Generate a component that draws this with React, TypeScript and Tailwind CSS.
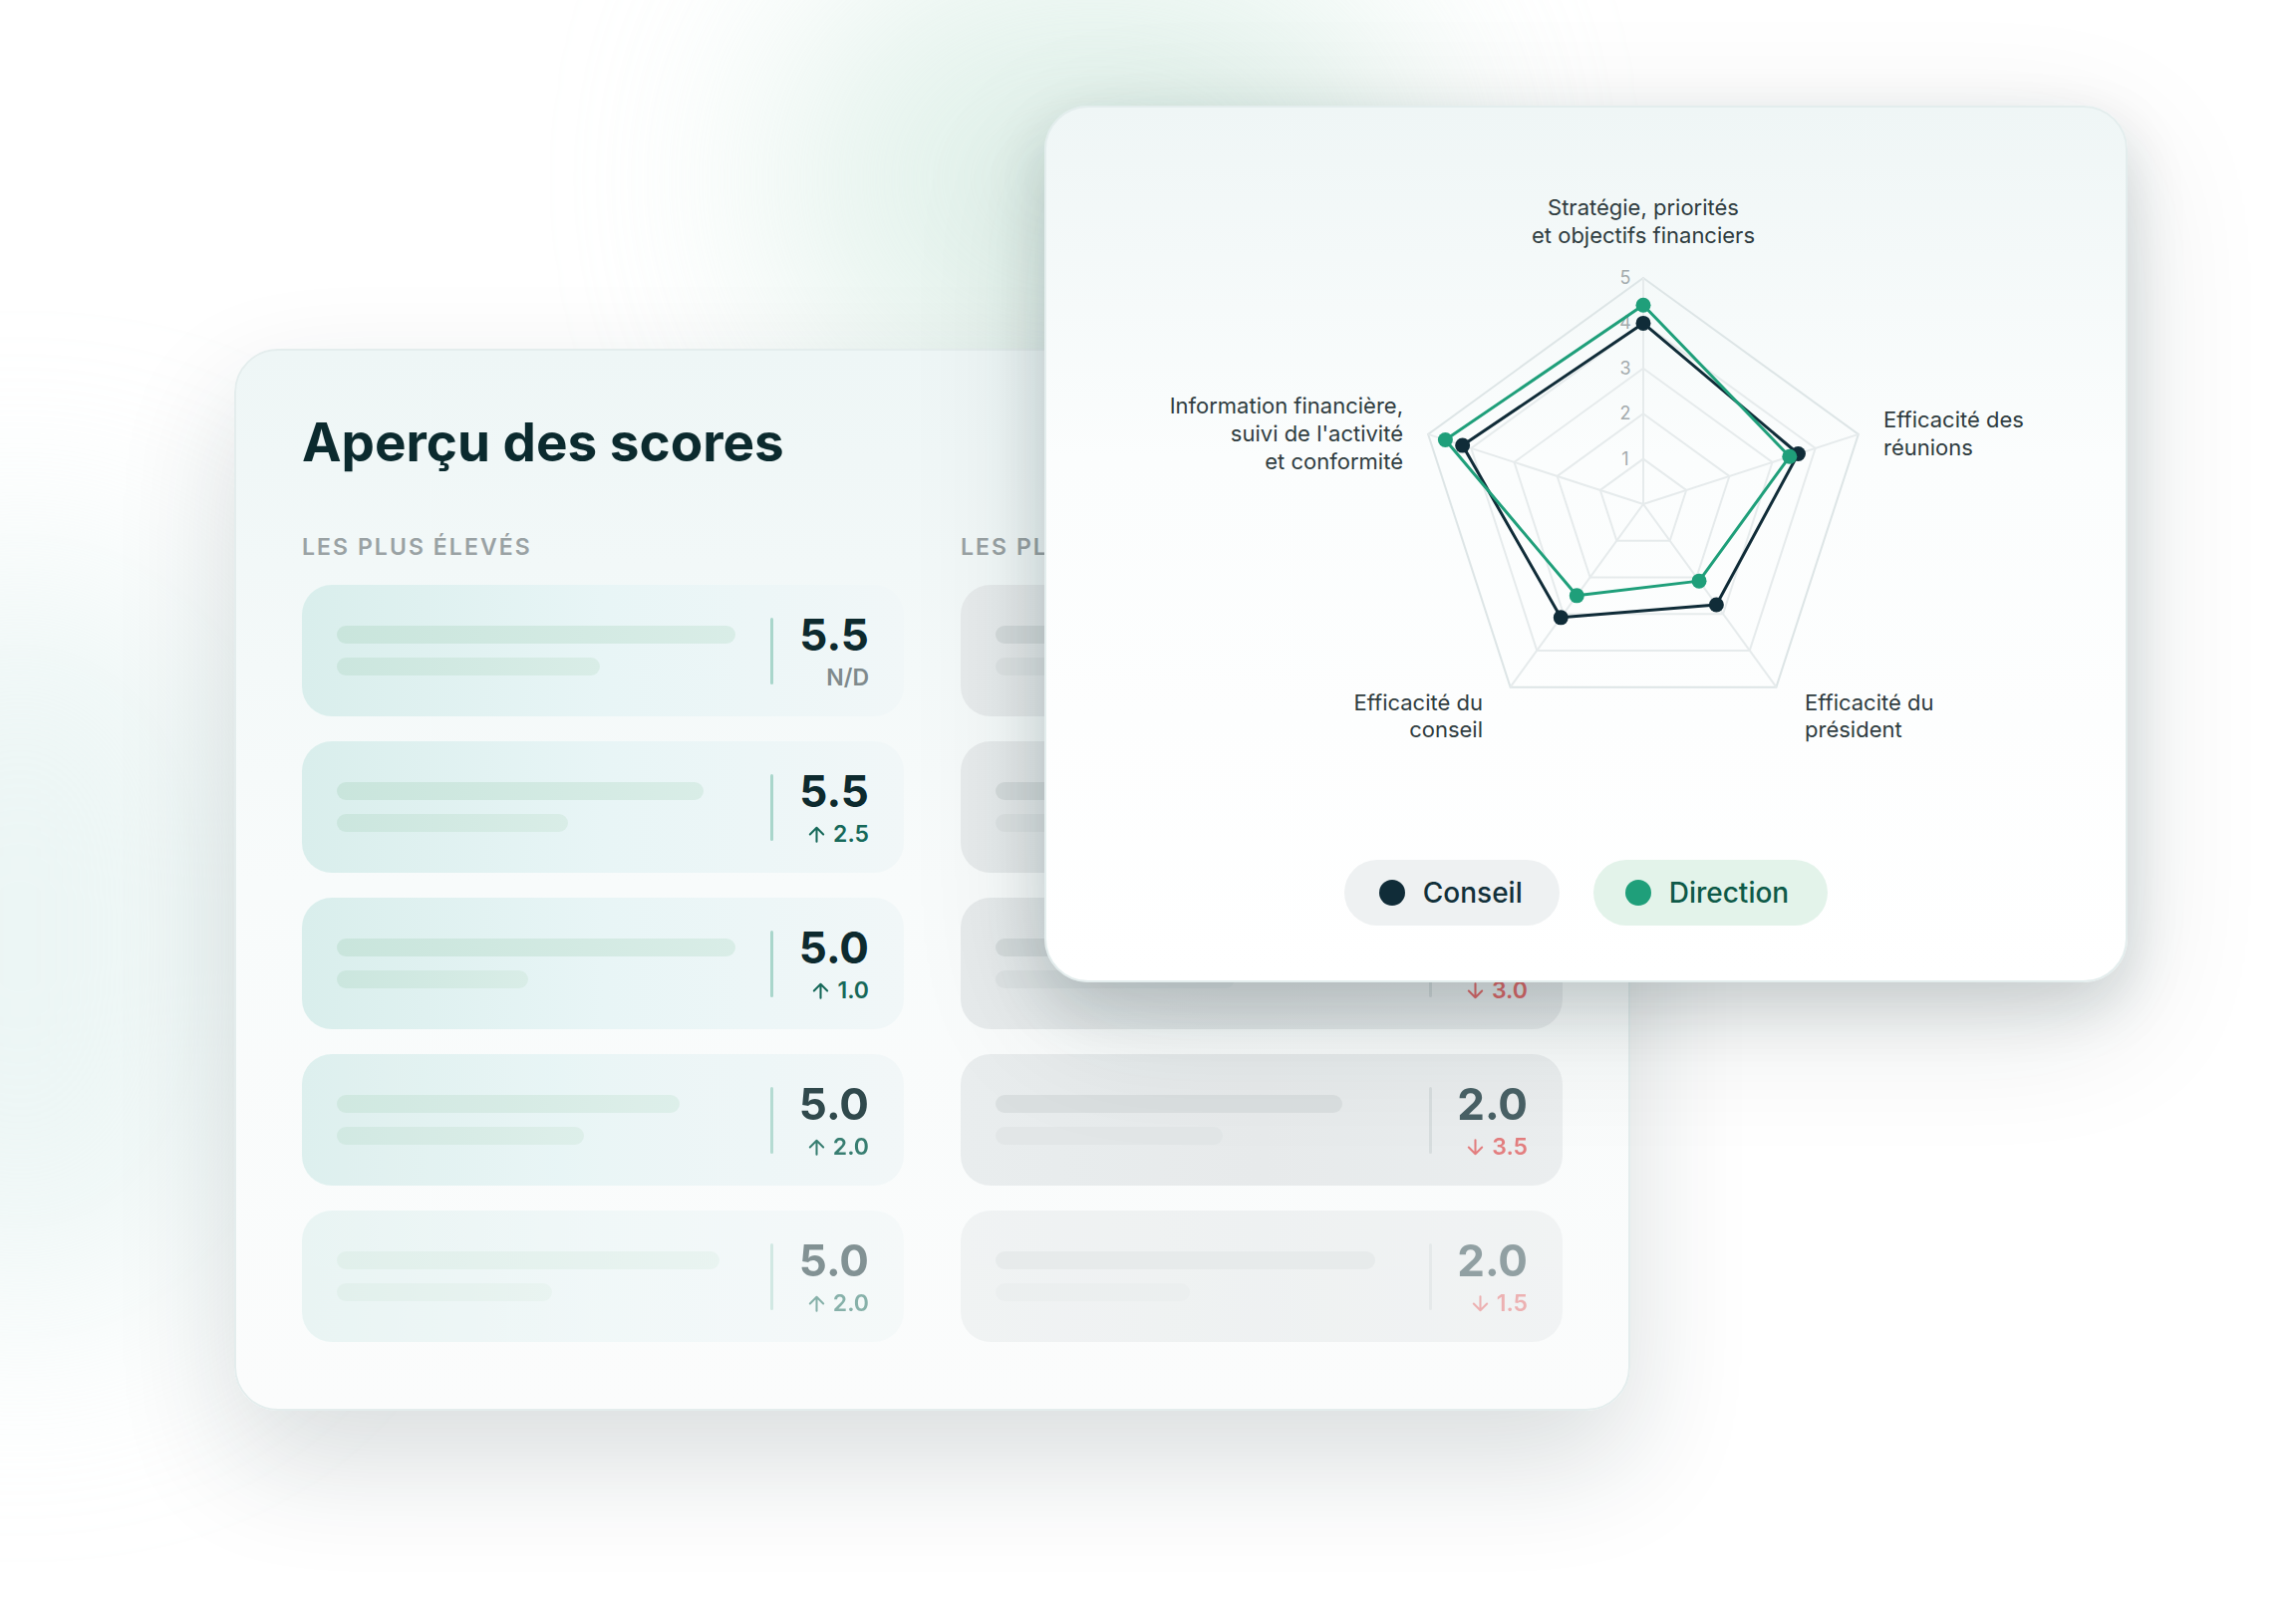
import React from "react";

type Row = {
  bars: [number, number];
  score: string;
  delta: string;
  dir: "up" | "down" | "none";
};

const high: Row[] = [
  { bars: [400, 264], score: "5.5", delta: "N/D", dir: "none" },
  { bars: [368, 232], score: "5.5", delta: "2.5", dir: "up" },
  { bars: [400, 192], score: "5.0", delta: "1.0", dir: "up" },
  { bars: [344, 248], score: "5.0", delta: "2.0", dir: "up" },
  { bars: [384, 216], score: "5.0", delta: "2.0", dir: "up" },
];

const low: Row[] = [
  { bars: [380, 250], score: "1.5", delta: "4.0", dir: "down" },
  { bars: [360, 220], score: "2.0", delta: "3.0", dir: "down" },
  { bars: [372, 240], score: "2.5", delta: "3.0", dir: "down" },
  { bars: [348, 228], score: "2.0", delta: "3.5", dir: "down" },
  { bars: [381, 195], score: "2.0", delta: "1.5", dir: "down" },
];

const fade = ["opacity-100", "opacity-100", "opacity-100", "opacity-85", "opacity-50"];

function Arrow({ dir }: { dir: "up" | "down" }) {
  return (
    <svg width="17" height="17" viewBox="0 0 14 14" fill="none" stroke="currentColor" strokeWidth="1.7" strokeLinecap="round" strokeLinejoin="round">
      {dir === "up" ? <path d="M7 13V1.5M1.5 7L7 1.5L12.5 7" /> : <path d="M7 1v11.5M1.5 7L7 12.5L12.5 7" />}
    </svg>
  );
}

function ScoreRow({ row, tone, idx }: { row: Row; tone: "green" | "gray"; idx: number }) {
  const green = tone === "green";
  return (
    <div
      className={`flex h-[132px] items-center rounded-[30px] px-[35px] ${fade[idx]} ${
        green
          ? "bg-linear-to-r from-[#d9eeec] via-[#e8f5f6] to-[#f1f7f8]"
          : "bg-linear-to-r from-[#e7ebec] via-[#e4e8e9] to-[#e9eced]"
      }`}
    >
      <div className="flex flex-1 flex-col gap-[14px]">
        <div
          className={`h-[18px] rounded-full ${green ? "bg-linear-to-r from-[#c9e5dc] to-[#d9ede7]" : "bg-[#d5dbdc]"}`}
          style={{ width: row.bars[0] }}
        />
        <div
          className={`h-[18px] rounded-full ${green ? "bg-linear-to-r from-[#cbe6de] to-[#d9ede7]" : "bg-[#dee3e4]"}`}
          style={{ width: row.bars[1] }}
        />
      </div>
      <div className={`h-[67px] w-[3px] rounded-full ${green ? "bg-[#a9d6cb]" : "bg-[#d2d8d9]"}`} />
      <div className="ml-[24px] flex w-[72px] flex-col items-end">
        <div className={`text-[44px] font-bold leading-none ${green ? "text-[#0d2a2e]" : "text-[#2b474c]"}`}>
          {row.score}
        </div>
        <div
          className={`mt-[10px] flex items-center gap-[8px] text-[23px] font-semibold leading-none ${
            row.dir === "none" ? "text-[#7f8a8c]" : row.dir === "up" ? "text-[#17695a]" : "text-[#e0696a]"
          }`}
        >
          {row.dir !== "none" && <Arrow dir={row.dir} />}
          <span>{row.delta}</span>
        </div>
      </div>
    </div>
  );
}

const CX = 599;
const CY = 398;
const STEP = 45.4;

function pt(v: number, i: number) {
  const a = ((-90 + 72 * i) * Math.PI) / 180;
  return [CX + v * STEP * Math.cos(a), CY + v * STEP * Math.sin(a)];
}

function poly(vals: number[]) {
  return vals.map((v, i) => pt(v, i).join(",")).join(" ");
}

const conseil = [4.0, 3.6, 2.75, 3.1, 4.2];
const direction = [4.4, 3.4, 2.1, 2.5, 4.6];

function Radar() {
  return (
    <svg width="1087" height="720" viewBox="0 0 1087 720" className="block">
      {[1, 2, 3, 4, 5].map((k) => (
        <polygon
          key={k}
          points={poly([k, k, k, k, k])}
          fill="none"
          stroke={k === 5 ? "#dde5e6" : "#e6ebec"}
          strokeWidth="2"
        />
      ))}
      {[0, 1, 2, 3, 4].map((i) => {
        const [x, y] = pt(5, i);
        return <line key={i} x1={CX} y1={CY} x2={x} y2={y} stroke="#e6ebec" strokeWidth="2" />;
      })}
      {[1, 2, 3, 4, 5].map((k) => (
        <text key={k} x={CX - 18} y={CY - k * STEP + 6} textAnchor="middle" fontSize="18" fill="#a3abad">
          {k}
        </text>
      ))}
      <polygon points={poly(conseil)} fill="none" stroke="#102c38" strokeWidth="3" strokeLinejoin="round" />
      {conseil.map((v, i) => {
        const [x, y] = pt(v, i);
        return <circle key={i} cx={x} cy={y} r="7.5" fill="#102c38" />;
      })}
      <polygon points={poly(direction)} fill="none" stroke="#1f9f7a" strokeWidth="3" strokeLinejoin="round" />
      {direction.map((v, i) => {
        const [x, y] = pt(v, i);
        return <circle key={i} cx={x} cy={y} r="7.5" fill="#1f9f7a" />;
      })}
      <g fontSize="22" fill="#2f3c3f">
        <text x={CX} y={108} textAnchor="middle">Stratégie, priorités</text>
        <text x={CX} y={136} textAnchor="middle">et objectifs financiers</text>
        <text x={840} y={321}>Efficacité des</text>
        <text x={840} y={349}>réunions</text>
        <text x={358} y={307} textAnchor="end">Information financière,</text>
        <text x={358} y={335} textAnchor="end">suivi de l'activité</text>
        <text x={358} y={363} textAnchor="end">et conformité</text>
        <text x={438} y={605} textAnchor="end">Efficacité du</text>
        <text x={438} y={632} textAnchor="end">conseil</text>
        <text x={761} y={605}>Efficacité du</text>
        <text x={761} y={632}>président</text>
      </g>
    </svg>
  );
}

export default function App() {
  return (
    <div className="relative h-[1626px] w-[2304px] overflow-hidden bg-white font-['Inter','Noto_Sans',sans-serif]">
      <div className="absolute left-[780px] top-[-60px] h-[480px] w-[640px] rounded-full bg-[#cfe9de] opacity-60 blur-[110px]" />
      <div className="absolute left-[-220px] top-[560px] h-[760px] w-[480px] rounded-full bg-[#d8ecea] opacity-50 blur-[120px]" />

      <div className="pl-[235px] pt-[350px]">
        <div className="relative h-[1066px] w-[1401px] rounded-[44px] border-2 border-[#e4eded] bg-linear-to-b from-[#eef6f6] via-[#f8fbfb] to-[#fbfcfc] px-[66px] pt-[66px] shadow-[0_50px_120px_rgba(20,45,50,0.16)]">
          <h1 className="text-[53px] font-bold leading-none text-[#0b2a2e]">Aperçu des scores</h1>
          <div className="mt-[67px] grid grid-cols-2 gap-x-[57px]">
            <div>
              <div className="text-[23px] font-semibold uppercase leading-none tracking-[0.09em] text-[#9aa2a4]">
                Les plus élevés
              </div>
              <div className="mt-[26px] flex flex-col gap-[25px]">
                {high.map((r, i) => (
                  <ScoreRow key={i} row={r} tone="green" idx={i} />
                ))}
              </div>
            </div>
            <div>
              <div className="text-[23px] font-semibold uppercase leading-none tracking-[0.09em] text-[#9aa2a4]">
                Les plus bas
              </div>
              <div className="mt-[26px] flex flex-col gap-[25px]">
                {low.map((r, i) => (
                  <ScoreRow key={i} row={r} tone="gray" idx={i} />
                ))}
              </div>
            </div>
          </div>
        </div>
      </div>

      <div className="absolute left-[1048px] top-[106px] flex h-[880px] w-[1087px] flex-col rounded-[44px] border-2 border-[#e3eded] bg-linear-to-b from-[#eff6f6] via-[#fbfdfd] via-40% to-white shadow-[0_24px_60px_rgba(15,40,45,0.16),0_40px_140px_rgba(15,40,45,0.12)]">
        <Radar />
        <div className="mt-[35px] flex justify-center gap-[34px]">
          <div className="flex h-[66px] items-center gap-[18px] rounded-full bg-[#eef1f2] pl-[35px] pr-[37px]">
            <span className="h-[26px] w-[26px] rounded-full bg-[#102c38]" />
            <span className="text-[28px] font-medium text-[#12303a]">Conseil</span>
          </div>
          <div className="flex h-[66px] items-center gap-[18px] rounded-full bg-[#e3f3ea] pl-[32px] pr-[39px]">
            <span className="h-[26px] w-[26px] rounded-full bg-[#1f9f7a]" />
            <span className="text-[28px] font-medium text-[#0e5a48]">Direction</span>
          </div>
        </div>
      </div>
    </div>
  );
}
